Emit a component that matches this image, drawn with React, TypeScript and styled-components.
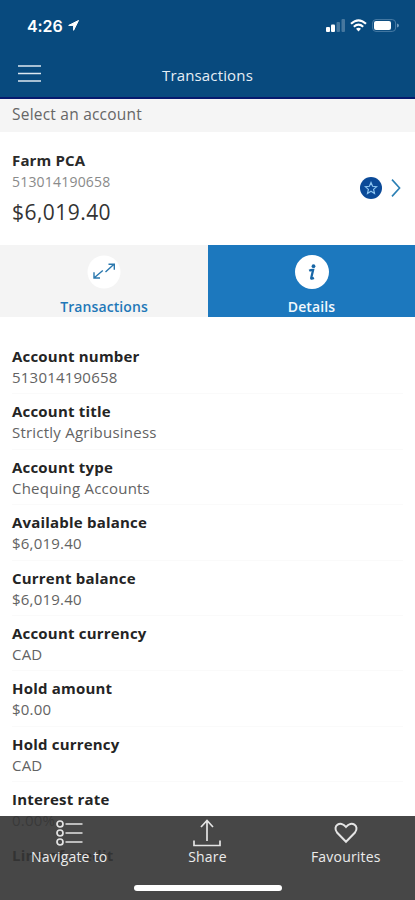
import React from "react";
import styled, { createGlobalStyle } from "styled-components";

const GlobalStyle = createGlobalStyle`
  * { box-sizing: border-box; }
  body { margin: 0; background: #fff; overflow: hidden; font-family: "Open Sans", "Noto Sans", sans-serif; }
`;

const Screen = styled.main`
  position: relative;
  width: 415px;
  height: 900px;
  overflow: hidden;
  background: #fff;
`;

const Header = styled.header`
  height: 99px;
  background: #084a7e;
  border-bottom: 2px solid #061a6e;
  color: #fff;
`;

const StatusBar = styled.div`
  height: 50px;
  padding: 1px 16px 0 27px;
  display: flex;
  align-items: center;
  justify-content: space-between;
`;

const Clock = styled.span`
  display: flex;
  align-items: center;
  gap: 5px;
  font: 600 16px/20px Inter, sans-serif;
  letter-spacing: -0.1px;
`;

const StatusIcons = styled.span`
  display: flex;
  align-items: center;
  gap: 5px;
`;

const NavBar = styled.div`
  height: 47px;
  padding: 0 18px;
  display: grid;
  grid-template-columns: 60px 1fr 60px;
  align-items: center;
`;

const Title = styled.h1`
  margin: 3px 0 0;
  text-align: center;
  font-size: 15px;
  line-height: 20px;
  font-weight: 500;
  letter-spacing: 0.15px;
  color: #e6eef5;
`;

const SectionLabel = styled.div`
  height: 33px;
  padding: 5px 12px 0;
  background: #f5f5f5;
  color: #666;
  font-size: 15.5px;
  line-height: 20px;
  letter-spacing: 0.22px;
`;

const AccountCard = styled.section`
  height: 113px;
  padding: 18px 14px 0 12px;
  display: flex;
  justify-content: space-between;
`;

const AccountName = styled.div`
  font-size: 15px;
  line-height: 21px;
  font-weight: 700;
  letter-spacing: 0.15px;
  color: #2a2a2a;
`;

const AccountNumber = styled.div`
  font-size: 14px;
  line-height: 22px;
  letter-spacing: 0.2px;
  color: #8a8a8a;
`;

const Balance = styled.div`
  margin-top: 4px;
  font-size: 21px;
  line-height: 30px;
  letter-spacing: 0.45px;
  color: #333;
`;

const CardActions = styled.div`
  height: 75px;
  display: flex;
  align-items: center;
  gap: 9px;
`;

const Tabs = styled.nav`
  height: 72px;
  display: grid;
  grid-template-columns: 208px 207px;
`;

const Tab = styled.div<{ $active?: boolean }>`
  padding-top: 10px;
  display: flex;
  flex-direction: column;
  align-items: center;
  background: ${(p) => (p.$active ? "#1c78be" : "#f4f4f4")};
  color: ${(p) => (p.$active ? "#f2f8fd" : "#1f78b8")};
  font-size: 14px;
  line-height: 20px;
  font-weight: 600;
  letter-spacing: 0.1px;
`;

const TabIcon = styled.svg`
  display: block;
  width: 34px;
  height: 34px;
  margin-bottom: 8px;
`;

const DetailList = styled.dl`
  margin: 0;
  padding: 22px 12px 0;
`;

const DetailRow = styled.div`
  height: 55.4px;
  padding-top: 7px;
  border-bottom: 1px solid #fafafa;
`;

const DetailLabel = styled.dt`
  font-size: 15px;
  line-height: 21px;
  font-weight: 700;
  letter-spacing: 0.2px;
  color: #242424;
`;

const DetailValue = styled.dd`
  margin: 0;
  font-size: 15px;
  line-height: 21px;
  letter-spacing: 0.22px;
  color: #636363;
`;

const BottomBar = styled.footer`
  position: absolute;
  left: 0;
  right: 0;
  bottom: 0;
  height: 84px;
  background: rgba(53, 53, 53, 0.91);
`;

const BottomActions = styled.div`
  height: 66px;
  display: grid;
  grid-template-columns: repeat(3, 1fr);
`;

const BottomAction = styled.div`
  padding-top: 3px;
  display: flex;
  flex-direction: column;
  align-items: center;
  color: #ececec;
  font-size: 14px;
  line-height: 20px;
  letter-spacing: 0.2px;
`;

const ActionIcon = styled.svg`
  display: block;
  width: 30px;
  height: 28px;
  fill: none;
  stroke: #e4e4e4;
  stroke-width: 1.7;
`;

const HomeIndicator = styled.div`
  width: 148px;
  height: 6px;
  margin: 3px auto 0;
  border-radius: 3px;
  background: #fff;
`;

const details: { label: string; value?: string }[] = [
  { label: "Account number", value: "513014190658" },
  { label: "Account title", value: "Strictly Agribusiness" },
  { label: "Account type", value: "Chequing Accounts" },
  { label: "Available balance", value: "$6,019.40" },
  { label: "Current balance", value: "$6,019.40" },
  { label: "Account currency", value: "CAD" },
  { label: "Hold amount", value: "$0.00" },
  { label: "Hold currency", value: "CAD" },
  { label: "Interest rate", value: "0.00%" },
  { label: "Line of credit" },
];

export default function App() {
  return (
    <>
      <GlobalStyle />
      <Screen>
        <Header>
          <StatusBar>
            <Clock>
              4:26
              <svg width="11" height="11" viewBox="0 0 11 11"><path d="M10.5.5.7 5.400h4.900v4.900Z" fill="#fff" stroke="#fff" strokeWidth="1" strokeLinejoin="round" /></svg>
            </Clock>
            <StatusIcons>
              <svg width="19" height="13" viewBox="0 0 19 13" fill="#fff">
                <rect x="0" y="8" width="4" height="5" rx="1" />
                <rect x="5" y="5.5" width="4" height="7.5" rx="1" />
                <g opacity=".25"><rect x="10.500" y="3" width="3.500" height="10" rx="1" /><rect x="15.500" y="0" width="3.500" height="13" rx="1" /></g>
              </svg>
              <svg width="17" height="13" viewBox="0 0 17 13" fill="none" stroke="#fff" strokeWidth="2.1">
                <path d="M1 4.8Q8.5-2.2 16 4.8M3.8 7.7q4.7-4.1 9.4 0" />
                <path d="m6 9.8 2.5 2.8L11 9.8q-2.5-2-5 0Z" fill="#fff" stroke="none" />
              </svg>
              <svg width="27" height="13" viewBox="0 0 27 13">
                <rect x=".6" y=".6" width="23" height="11.8" rx="3.4" fill="none" stroke="#4a7ca5" />
                <rect x="2" y="2" width="17" height="9" rx="2" fill="#fff" />
                <path d="M25 4.5q2 .5 2 2t-2 2Z" fill="#6f9abd" />
              </svg>
            </StatusIcons>
          </StatusBar>
          <NavBar>
            <svg width="23" height="19" viewBox="0 0 23 19" stroke="#dce8f1" strokeWidth="1.7"><path d="M0 2h23M0 9.5h23M0 17h23" /></svg>
            <Title>Transactions</Title>
          </NavBar>
        </Header>
        <SectionLabel>Select an account</SectionLabel>
        <AccountCard>
          <div>
            <AccountName>Farm PCA</AccountName>
            <AccountNumber>513014190658</AccountNumber>
            <Balance>$6,019.40</Balance>
          </div>
          <CardActions>
            <svg width="22" height="22" viewBox="0 0 22 22">
              <circle cx="11" cy="11" r="11" fill="#0b4a98" />
              <path d="m11 5.6 1.6 3.7 4 .4-3 2.7.9 4-3.5-2.1-3.5 2.1.9-4-3-2.7 4-.4Z" fill="none" stroke="#8cc4f0" strokeWidth="1.2" />
            </svg>
            <svg width="10" height="18" viewBox="0 0 10 18" fill="none" stroke="#2a7fb4" strokeWidth="1.6"><path d="m1 .6 7.600 8.400L1 17.400" /></svg>
          </CardActions>
        </AccountCard>
        <Tabs>
          <Tab>
            <TabIcon viewBox="0 0 34 34">
              <circle cx="17" cy="17" r="16.5" fill="#fff" />
              <path d="m18.500 17 8.700-8M21.500 9.200h5.800v5.600M15.800 15.500l-8.800 7.500M7 17.300v5.700h6" fill="none" stroke="#2b78ae" strokeWidth="1.4" />
            </TabIcon>
            Transactions
          </Tab>
          <Tab $active>
            <TabIcon viewBox="0 0 34 34">
              <circle cx="17" cy="17" r="17" fill="#fff" />
              <circle cx="18.5" cy="11.2" r="1.9" fill="#1766a6" />
              <path d="M14.200 15.700q1.500-.8 3.900-.8l-1.900 8.200q-.1 1.200 2.700-.2" fill="none" stroke="#1766a6" strokeWidth="2.300" />
            </TabIcon>
            Details
          </Tab>
        </Tabs>
        <DetailList>
          {details.map(({ label, value }) => (
            <DetailRow key={label}>
              <DetailLabel>{label}</DetailLabel>
              {value && <DetailValue>{value}</DetailValue>}
            </DetailRow>
          ))}
        </DetailList>
        <BottomBar>
          <BottomActions>
            <BottomAction>
              <ActionIcon viewBox="0 0 30 28">
                <circle cx="6" cy="5" r="3" /><circle cx="6" cy="14" r="3" /><circle cx="6" cy="23" r="3" />
                <path d="M11.500 5h17M11.500 14h17M11.500 23h17" />
              </ActionIcon>
              Navigate to
            </BottomAction>
            <BottomAction>
              <ActionIcon viewBox="0 0 30 28"><path d="M2 21.500v5h26v-5M15 22V2M9 8l6-6.500L21 8" /></ActionIcon>
              Share
            </BottomAction>
            <BottomAction>
              <ActionIcon viewBox="0 0 30 28"><path d="M15 22.800 6 13.500C1 7 9.500 1 15 8c5.500-7 14-1 9 5.500Z" strokeWidth="2" /></ActionIcon>
              Favourites
            </BottomAction>
          </BottomActions>
          <HomeIndicator />
        </BottomBar>
      </Screen>
    </>
  );
}
